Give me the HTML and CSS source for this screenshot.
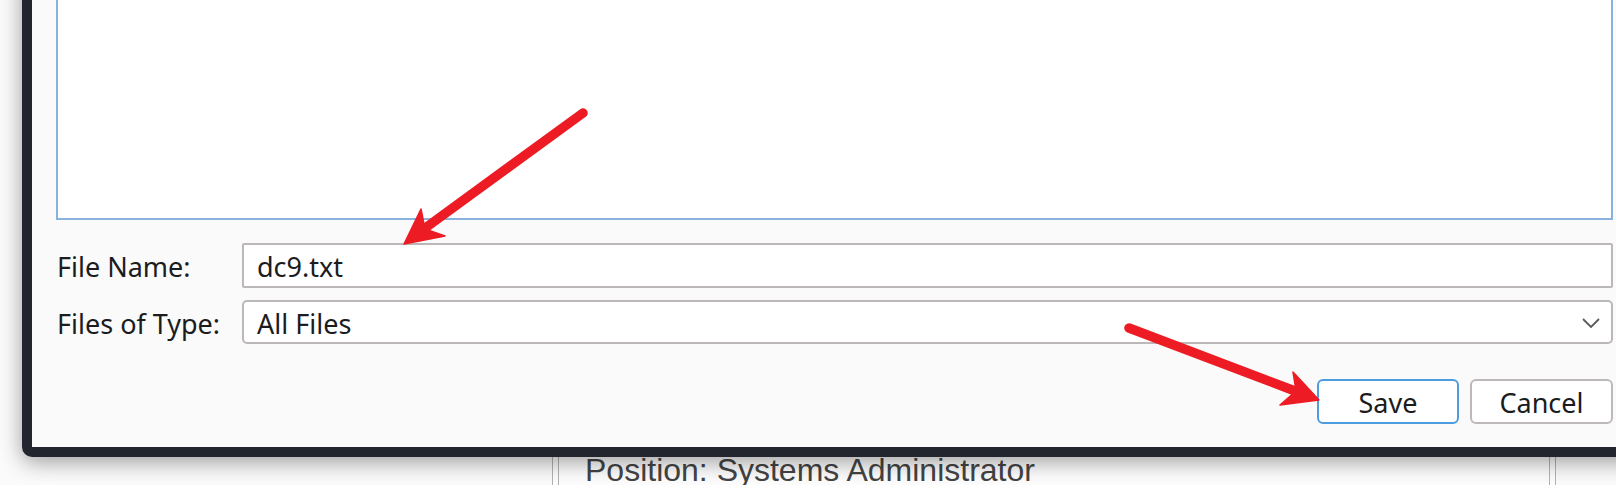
FILE: index.html
```html
<!DOCTYPE html>
<html>
<head>
<meta charset="utf-8">
<title>Save dialog</title>
<link rel="stylesheet" href="styles.css">
</head>
<body>
<div class="page">
  <div class="profile">
    <div class="profile-inner">Position: Systems Administrator</div>
  </div>
</div>

<div class="dialog">
  <div class="listbox"></div>
  <div class="form">
    <label class="lbl">File Name:</label>
    <div class="field input">dc9.txt</div>
    <label class="lbl">Files of Type:</label>
    <div class="field combo">
      <span class="combo-text">All Files</span>
      <svg class="chevron" width="18" height="10" viewBox="0 0 18 10"><path d="M1 1 L9 9 L17 1" fill="none" stroke="#5b5b5b" stroke-width="1.8"/></svg>
    </div>
  </div>
  <div class="buttons">
    <button class="btn primary">Save</button>
    <button class="btn">Cancel</button>
  </div>
</div>

<svg class="annot" width="1616" height="485" viewBox="0 0 1616 485">
  <g fill="#ed1c24" stroke="#ed1c24">
    <line x1="583" y1="113" x2="428" y2="226" stroke-width="9.5" stroke-linecap="round"/>
    <polygon points="404,244 421,209 425,229 445,236" stroke-width="1.5" stroke-linejoin="round"/>
    <line x1="1129" y1="328" x2="1295" y2="391" stroke-width="9.5" stroke-linecap="round"/>
    <polygon points="1319,400 1293,372 1296,391 1280,405" stroke-width="1.5" stroke-linejoin="round"/>
  </g>
</svg>
</body>
</html>
```

FILE: styles.css
```css
html, body {
  margin: 0;
  padding: 0;
}
body {
  width: 1616px;
  height: 485px;
  overflow: hidden;
  position: relative;
  background: #fbfbfb;
  font-family: "Noto Sans", "DejaVu Sans", sans-serif;
  color: #1b1c1e;
}

.page {
  padding-top: 444px;
  padding-left: 552px;
}
.profile {
  width: 1004px;
  box-sizing: border-box;
  border-left: 1px solid #b3b3b3;
  border-right: 1px solid #b3b3b3;
  padding: 0 5px;
  background: #fdfdfd;
}
.profile-inner {
  border-left: 1px solid #b3b3b3;
  border-right: 1px solid #b3b3b3;
  height: 60px;
  padding: 8px 0 0 26px;
  box-sizing: border-box;
  font-family: "Liberation Sans", Arial, sans-serif;
  font-size: 32px;
  color: #444444;
  white-space: nowrap;
}

.dialog {
  position: absolute;
  left: 22px;
  top: -30px;
  width: 1625px;
  box-sizing: border-box;
  border: 10px solid #22252e;
  border-radius: 10px;
  background: #fafafa;
  padding: 0 24px 23px 24px;
  box-shadow: 0 5px 22px rgba(0, 0, 0, 0.38);
}

.listbox {
  margin-top: 10px;
  height: 230px;
  box-sizing: border-box;
  border: 2px solid #8ab2de;
  background: #ffffff;
}

.form {
  margin-top: 23px;
  display: grid;
  grid-template-columns: 186px 1fr;
  grid-template-rows: 45px 44px;
  row-gap: 12px;
  align-items: center;
  font-size: 27px;
}
.lbl {
  padding-left: 1px;
  padding-top: 2px;
  white-space: nowrap;
}
.field {
  height: 100%;
  box-sizing: border-box;
  border: 2px solid #bcb8b9;
  background: #ffffff;
  display: flex;
  align-items: center;
  padding-left: 13px;
  padding-top: 2px;
}
.input {
  border-radius: 2px;
}
.combo {
  border-radius: 5px;
  padding-right: 11px;
  justify-content: space-between;
}
.chevron {
  display: block;
  margin-top: -1px;
}

.buttons {
  margin-top: 35px;
  display: flex;
  justify-content: flex-end;
  gap: 11px;
}
.btn {
  width: 143px;
  height: 45px;
  box-sizing: border-box;
  border: 2px solid #bdb9ba;
  border-radius: 6px;
  background: #ffffff;
  font-family: "Noto Sans", "DejaVu Sans", sans-serif;
  font-size: 27px;
  color: #1b1c1e;
  padding: 2px 0 0 0;
}
.btn.primary {
  width: 142px;
  border-color: #4e9ce0;
}

.annot {
  position: absolute;
  left: 0;
  top: 0;
  pointer-events: none;
}
```
